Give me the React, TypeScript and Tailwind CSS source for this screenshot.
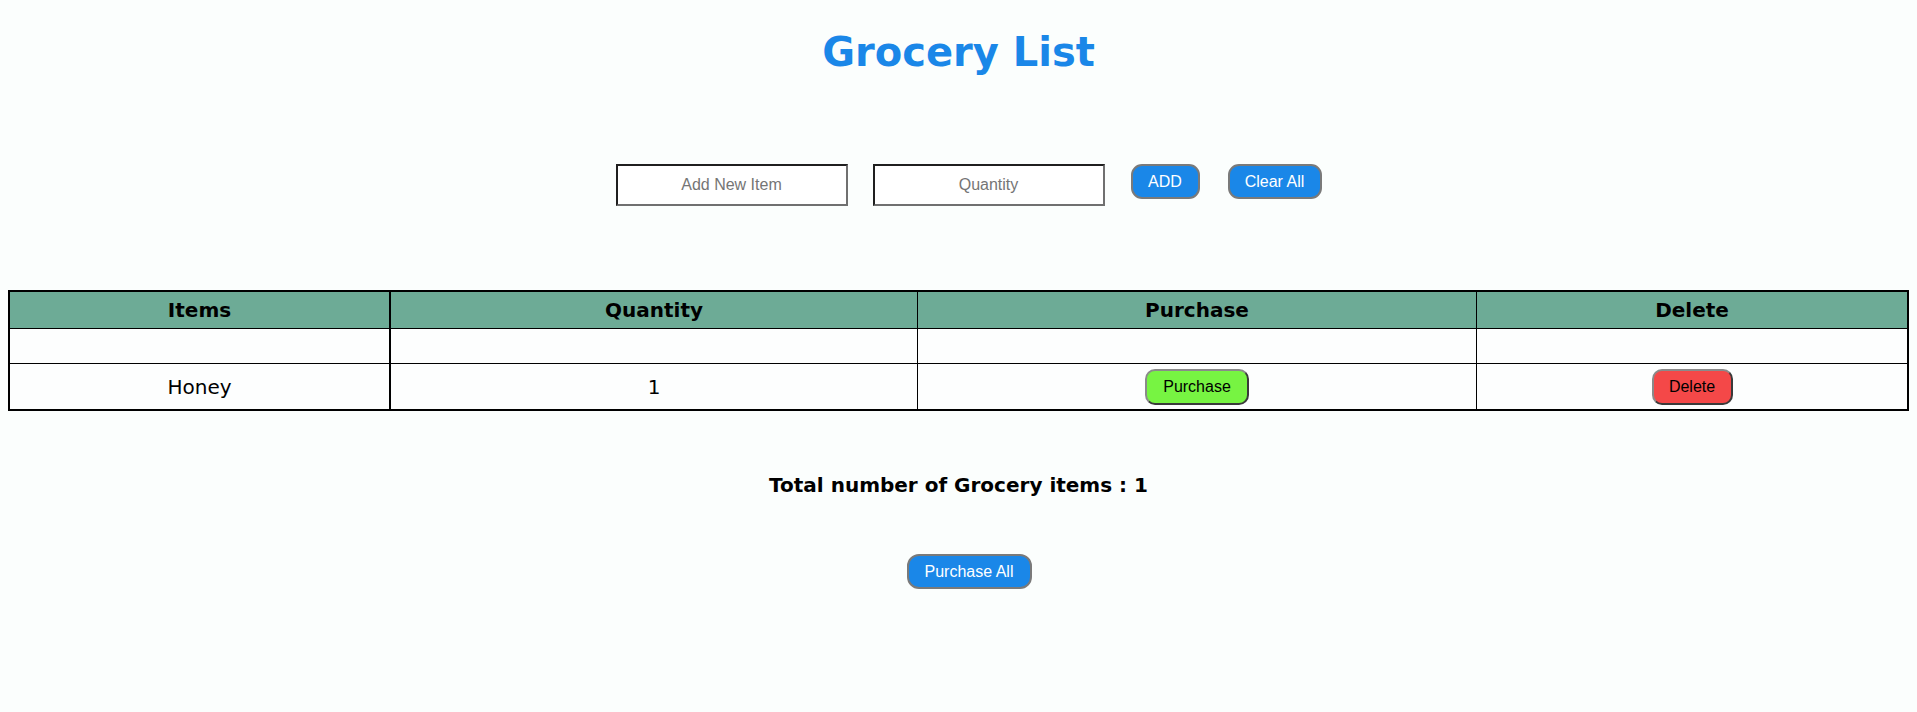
import React from "react";

type Item = { name: string; qty: string };

const btnBlue =
  "h-[35px] rounded-[11px] border-2 border-[#7a7a7a] bg-[#1a87e8] text-[16px] text-white font-['Liberation_Sans',Arial,sans-serif]";

const btnRow =
  "h-[36px] rounded-[10px] border-2 border-t-[#8a8a8a] border-l-[#8a8a8a] border-b-[#3a3a3a] border-r-[#3a3a3a] text-[16px] text-black font-['Liberation_Sans',Arial,sans-serif]";

const inputCls =
  "h-[42px] w-[232px] border-2 border-t-[#1f1f1f] border-l-[#1f1f1f] border-b-[#707070] border-r-[#707070] bg-white text-center text-[16px] outline-none placeholder:text-[#757575] font-['Liberation_Sans',Arial,sans-serif]";

export default function App() {
  const [items, setItems] = React.useState<Item[]>([
    { name: "", qty: "" },
    { name: "Honey", qty: "1" },
  ]);
  const [name, setName] = React.useState("");
  const [qty, setQty] = React.useState("");

  const add = () => {
    if (!name) return;
    setItems((prev) => [...prev, { name, qty }]);
    setName("");
    setQty("");
  };

  const count = items.filter((i) => i.name).length;

  return (
    <div className="min-h-screen bg-[#fbfefd] p-2 font-['DejaVu_Sans',Verdana,sans-serif] text-black">
      <h1 className="mt-[21px] h-[47px] text-center text-[40px] font-bold leading-[47px] text-[#1a87e8]">
        Grocery List
      </h1>

      {/* Inputs */}
      <div className="mt-[88px] flex items-start justify-center pl-[20px]">
        <input
          value={name}
          onChange={(e) => setName(e.target.value)}
          placeholder="Add New Item"
          className={inputCls}
        />
        <input
          value={qty}
          onChange={(e) => setQty(e.target.value)}
          placeholder="Quantity"
          className={inputCls + " ml-[25px]"}
        />
        <button className={btnBlue + " ml-[26px] w-[69px]"} onClick={add}>
          ADD
        </button>
        <button
          className={btnBlue + " ml-[28px] w-[94px]"}
          onClick={() => setItems([])}
        >
          Clear All
        </button>
      </div>

      {/* Table */}
      <table className="mt-[84px] w-full table-fixed border-separate border-spacing-0 border-2 border-black text-[20px]">
        <colgroup>
          <col className="w-[381px]" />
          <col className="w-[527px]" />
          <col className="w-[559px]" />
          <col />
        </colgroup>
        <thead className="bg-[#6dab96]">
          <tr>
            <th className="h-[37px] border-b border-r-2 border-black p-0 font-bold">Items</th>
            <th className="border-b border-r border-black p-0 font-bold">Quantity</th>
            <th className="border-b border-r border-black p-0 font-bold">Purchase</th>
            <th className="border-b border-black p-0 font-bold">Delete</th>
          </tr>
        </thead>
        <tbody className="bg-[#fdfefe]">
          {items.map((it, i) => {
            const last = i === items.length - 1;
            const b = last ? "" : " border-b";
            return (
              <tr key={i}>
                <td className={(last ? "h-[45px]" : "h-[35px]") + " border-r-2 border-black p-0 text-center" + b}>
                  {it.name}
                </td>
                <td className={"border-r border-black p-0 text-center" + b}>{it.qty}</td>
                <td className={"border-r border-black p-0 text-center" + b}>
                  {it.name && (
                    <button className={btnRow + " w-[104px] bg-[#77f442]"}>Purchase</button>
                  )}
                </td>
                <td className={"border-black p-0 text-center" + b}>
                  {it.name && (
                    <button
                      className={btnRow + " w-[81px] bg-[#f44848]"}
                      onClick={() => setItems((prev) => prev.filter((_, j) => j !== i))}
                    >
                      Delete
                    </button>
                  )}
                </td>
              </tr>
            );
          })}
        </tbody>
      </table>

      {/* Footer */}
      <p className="mt-[63px] h-[23px] text-center text-[20px] font-bold leading-[23px]">
        Total number of Grocery items : {count}
      </p>
      <div className="mt-[57px] flex justify-center pl-[21px]">
        <button className={btnBlue + " w-[125px] rounded-[12px]"}>Purchase All</button>
      </div>
    </div>
  );
}
